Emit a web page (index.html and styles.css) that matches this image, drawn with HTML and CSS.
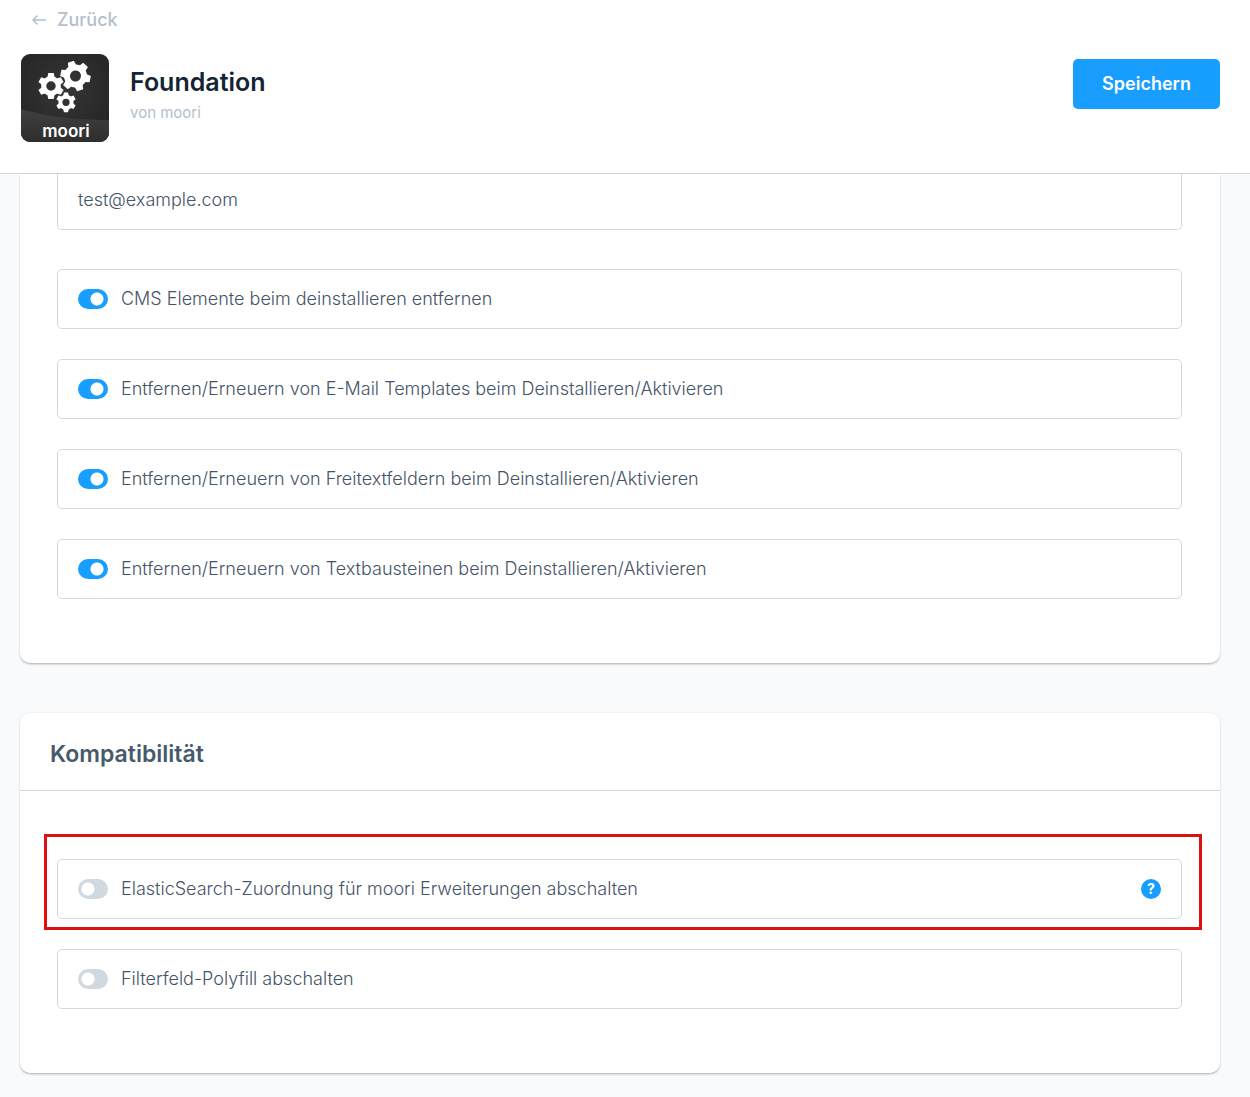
FILE: index.html
```html
<!DOCTYPE html>
<html lang="de">
<head>
<meta charset="utf-8">
<meta name="viewport" content="width=device-width, initial-scale=1">
<title>Foundation</title>
<link rel="stylesheet" href="styles.css">
</head>
<body>
<header class="page-header">
  <a class="back" href="#">
    <svg class="back-icon" viewBox="0 0 16 12" aria-hidden="true"><path d="M2 6H14.500M6 2L2 6l4 4"/></svg>
    Zurück
  </a>
  <div class="header-row">
    <svg class="logo" viewBox="0 0 88 88" role="img" aria-label="moori">
      <defs>
        <radialGradient id="shade" cx="50%" cy="40%" r="70%"><stop offset="0" stop-color="#363636"/><stop offset="1" stop-color="#232323"/></radialGradient>
        <linearGradient id="band" x2="0" y2="1"><stop offset="0" stop-color="#404040"/><stop offset="1" stop-color="#2e2e2e"/></linearGradient>
        <clipPath id="tile"><rect width="88" height="88" rx="9"/></clipPath>
        <path id="tooth" d="M-4.200-9.500L-3.200-15H3.200L4.200-9.500z"/>
        <g id="gear">
          <circle r="8.500" fill="none" stroke="#fff" stroke-width="6"/>
          <use href="#tooth"/>
          <use href="#tooth" transform="rotate(60)"/>
          <use href="#tooth" transform="rotate(120)"/>
          <use href="#tooth" transform="rotate(180)"/>
          <use href="#tooth" transform="rotate(240)"/>
          <use href="#tooth" transform="rotate(300)"/>
        </g>
      </defs>
      <g clip-path="url(#tile)">
        <rect width="88" height="88" fill="url(#shade)"/>
        <path d="M0 55Q40 67 88 66V88H0z" fill="url(#band)"/>
      </g>
      <g fill="#fff">
        <use href="#gear" transform="translate(54.500 22) rotate(-18)"/>
        <use href="#gear" transform="translate(30 32) scale(.86)"/>
        <use href="#gear" transform="translate(45 48.300) scale(.66)"/>
        <text class="logo-text" x="45" y="83" text-anchor="middle">moori</text>
      </g>
    </svg>
    <div class="heading">
      <h1>Foundation</h1>
      <p>von moori</p>
    </div>
    <button class="save" type="button">Speichern</button>
  </div>
</header>
<main class="content">
  <section class="card card-first" aria-label="Einstellungen">
    <div class="card-body">
      <input class="field text-field" type="email" value="test@example.com" aria-label="E-Mail">
      <label class="field"><input class="switch" type="checkbox" checked>CMS Elemente beim deinstallieren entfernen</label>
      <label class="field"><input class="switch" type="checkbox" checked>Entfernen/Erneuern von E-Mail Templates beim Deinstallieren/Aktivieren</label>
      <label class="field"><input class="switch" type="checkbox" checked>Entfernen/Erneuern von Freitextfeldern beim Deinstallieren/Aktivieren</label>
      <label class="field"><input class="switch" type="checkbox" checked>Entfernen/Erneuern von Textbausteinen beim Deinstallieren/Aktivieren</label>
    </div>
  </section>
  <section class="card">
    <h2>Kompatibilität</h2>
    <div class="card-body">
      <div class="marked">
        <div class="field">
          <label class="field-label"><input class="switch" type="checkbox">ElasticSearch-Zuordnung für moori Erweiterungen abschalten</label>
          <button class="help" type="button" aria-label="Hilfe">?</button>
        </div>
      </div>
      <label class="field"><input class="switch" type="checkbox">Filterfeld-Polyfill abschalten</label>
    </div>
  </section>
</main>
</body>
</html>
```

FILE: styles.css
```css
* { box-sizing: border-box; }
body {
  margin: 0;
  background: #f9fafb;
  color: #455468;
  font: 300 18px/26px Inter, "Liberation Sans", sans-serif;
}
h1, h2, p { margin: 0; }
button, input { font: inherit; }

.page-header {
  background: #fff;
  border-bottom: 1px solid #d1d9e0;
  padding: 7px 30px 31px 21px;
}
.back {
  display: flex;
  align-items: center;
  gap: 10px;
  width: max-content;
  margin-left: 10px;
  color: #b3bfcc;
  font-weight: 500;
  text-decoration: none;
}
.back-icon {
  width: 16px;
  height: 12px;
  fill: none;
  stroke: currentColor;
  stroke-width: 1.600;
  stroke-linecap: round;
  stroke-linejoin: round;
}
.header-row {
  display: flex;
  align-items: flex-start;
  margin-top: 21px;
}
.logo { width: 88px; height: 88px; }
.logo-text { font: 600 17px Inter, sans-serif; }
.heading { flex: 1; padding: 12px 0 0 21px; }
h1 {
  color: #142433;
  font-size: 25px;
  font-weight: 600;
  line-height: 32px;
}
.heading p { color: #b3bfcc; font-size: 15px; font-weight: 400; line-height: 30px; }
.save {
  min-width: 147px;
  height: 50px;
  margin-top: 5px;
  padding: 0 28px;
  border: 0;
  border-radius: 5px;
  background: #189eff;
  color: #fff;
  font-weight: 600;
}

.content { padding: 0 30px 24px 20px; }
.card {
  border-radius: 10px;
  background: #fff;
  box-shadow: 0 1px 1px rgba(0, 0, 0, .1), 0 2px 2px rgba(0, 0, 0, .12), 0 0 2px rgba(0, 0, 0, .1);
}
.card + .card { margin-top: 50px; }
.card-first { border-radius: 0 0 10px 10px; }
.card-body {
  display: flex;
  flex-direction: column;
  gap: 30px;
  padding: 68px 38px 64px 37px;
}
.card-first .card-body { padding-top: 0; }
h2 {
  padding: 28px 30px 23px;
  border-bottom: 1px solid #d1d9e0;
  color: #475a6b;
  font-size: 23px;
  font-weight: 600;
}
.field {
  display: flex;
  align-items: center;
  width: 100%;
  height: 60px;
  padding: 0 20px;
  border: 1px solid #d1d9e0;
  border-radius: 5px;
  background: #fff;
  color: #455468;
}
.text-field {
  height: 56px;
  padding-bottom: 4px;
  margin-bottom: 9px;
  border-top: 0;
  border-radius: 0 0 5px 5px;
  outline: 0;
}
.field-label { display: flex; flex: 1; align-items: center; }
.switch {
  appearance: none;
  flex: none;
  width: 30px;
  height: 20px;
  margin: 0 13px 0 0;
  border-radius: 10px;
  background: radial-gradient(circle at 10px 10px, #fff 6px, #d1d9e0 7px);
}
.switch:checked { background: radial-gradient(circle at 19px 10px, #fff 6px, #189eff 7px); }
.marked {
  margin: -25px -20px -11px -13px;
  padding: 22px 17px 8px 10px;
  border: 3px solid #e01010;
}
.help {
  width: 20px;
  height: 20px;
  padding: 0;
  border: 0;
  border-radius: 50%;
  background: #189eff;
  color: #fff;
  font-size: 14px;
  font-weight: 700;
  line-height: 20px;
}
```
